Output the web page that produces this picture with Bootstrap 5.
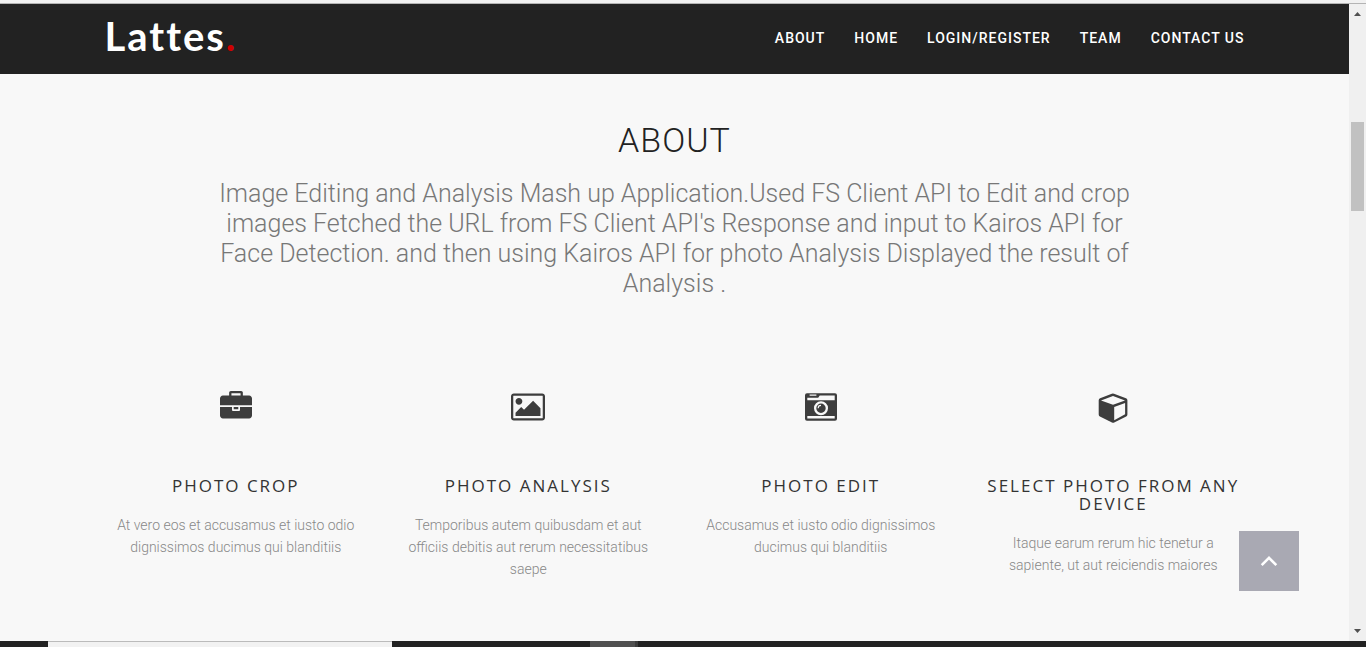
<!DOCTYPE html>
<html lang="en">
<head>
<meta charset="utf-8">
<meta name="viewport" content="width=device-width, initial-scale=1">
<title>Lattes</title>
<link href="https://cdn.jsdelivr.net/npm/bootstrap@5.3.0/dist/css/bootstrap.min.css" rel="stylesheet">
<style>
  body { font-family: Roboto, "Liberation Sans", sans-serif; background: #f8f8f8; }
  .chrome-top { height: 4px; background: #f1f1f1; border-bottom: 1px solid #b4b4b4; }
  .site-wrap { max-width: 1170px; padding: 0 15px; }
  .site-nav { background: #222; min-height: 70px; padding: 0; }
  .brand-name { font: 700 40px/48px Lato, sans-serif; letter-spacing: 2px; color: #fff; padding: 8px 0 14px; }
  .brand-name:hover { color: #fff; }
  .brand-name span { color: #d00000; }
  .site-links { gap: 29px; }
  .site-links a { color: #fff; font-weight: 500; font-size: 14px; line-height: 20px; letter-spacing: 1px; text-decoration: none; }
  .about-title { font-weight: 300; font-size: 34px; line-height: 40px; letter-spacing: 1px; color: #222; margin: 46px 0 19px; }
  .about-lead { font-weight: 300; font-size: 25px; line-height: 30px; color: #777; max-width: 940px; }
  .features { margin-top: 92px; --bs-gutter-x: 30px; }
  .feature-icon { height: 32px; fill: #3d3d3d; display: block; margin: 0 auto 54px; }
  .feature-title { font: 400 17px/18px "Open Sans", sans-serif; letter-spacing: 2px; color: #333; margin: 0 0 19px; }
  .feature-text { font-weight: 300; font-size: 14px; line-height: 22px; color: #888; }
  .to-top { right: 50px; bottom: 50px; width: 60px; height: 60px; background: #a9a9b3; border: 0; }
  .scroll-rail { width: 17px; background: #f0f0f0; }
  .scroll-thumb { width: 13px; height: 89px; background: #c1c1c1; margin-top: 106px; }
  .taskbar { height: 6px; background: #222; }
  .task-search { width: 344px; margin-left: 48px; background: #f2f2f2; border-top: 1px solid #bbb; }
  .task-active { width: 48px; margin-left: 198px; background: #505050; border-right: 3px solid #3c3c3c; }
</style>
</head>
<body class="vh-100 d-flex flex-column overflow-hidden">
<div class="chrome-top flex-shrink-0"></div>
<div class="d-flex flex-grow-1 overflow-hidden">
  <div class="flex-grow-1 position-relative overflow-hidden">
    <nav class="navbar site-nav">
      <div class="container-fluid site-wrap d-flex align-items-start">
        <a class="navbar-brand brand-name m-0" href="#">Lattes<span>.</span></a>
        <div class="site-links d-flex pt-4">
          <a href="#about">ABOUT</a>
          <a href="#home">HOME</a>
          <a href="#login">LOGIN/REGISTER</a>
          <a href="#team">TEAM</a>
          <a href="#contact">CONTACT US</a>
        </div>
      </div>
    </nav>
    <main class="container-fluid site-wrap text-center" id="about">
      <h2 class="about-title">ABOUT</h2>
      <p class="about-lead mx-auto mb-0">Image Editing and Analysis Mash up Application.Used FS Client API to Edit and crop images Fetched the URL from FS Client API's Response and input to Kairos API for Face Detection. and then using Kairos API for photo Analysis Displayed the result of Analysis .</p>
      <div class="row features">
        <div class="col-3">
          <svg class="feature-icon" width="32" viewBox="0 0 1792 1792" aria-hidden="true"><path d="M640 256h512v-128h-512v128zm1152 640v480q0 66-47 113t-113 47h-1472q-66 0-113-47t-47-113v-480h672v160q0 26 19 45t45 19h320q26 0 45-19t19-45v-160h672zm-768 0v128h-256v-128h256zm768-480v384h-1792v-384q0-66 47-113t113-47h352v-160q0-40 28-68t68-28h576q40 0 68 28t28 68v160h352q66 0 113 47t47 113z"/></svg>
          <h4 class="feature-title">PHOTO CROP</h4>
          <p class="feature-text px-2 mb-0">At vero eos et accusamus et iusto odio dignissimos ducimus qui blanditiis</p>
        </div>
        <div class="col-3">
          <svg class="feature-icon" width="34" viewBox="64 0 1920 1792" aria-hidden="true"><path d="M704 576q0 80-56 136t-136 56-136-56-56-136 56-136 136-56 136 56 56 136zm1024 384v448h-1408v-192l320-320 160 160 512-512zm96-704h-1600q-13 0-22.5 9.5t-9.5 22.5v1216q0 13 9.5 22.5t22.5 9.5h1600q13 0 22.5-9.5t9.5-22.5v-1216q0-13-9.5-22.5t-22.5-9.5zm160 32v1216q0 66-47 113t-113 47h-1600q-66 0-113-47t-47-113v-1216q0-66 47-113t113-47h1600q66 0 113 47t47 113z"/></svg>
          <h4 class="feature-title">PHOTO ANALYSIS</h4>
          <p class="feature-text px-2 mb-0">Temporibus autem quibusdam et aut officiis debitis aut rerum necessitatibus saepe</p>
        </div>
        <div class="col-3">
          <svg class="feature-icon" width="32" viewBox="0 0 32 32" aria-hidden="true"><path fill-rule="evenodd" d="M2 2.300h28a2 2 0 0 1 2 2v23.400a2 2 0 0 1-2 2H2a2 2 0 0 1-2-2V4.300a2 2 0 0 1 2-2zM2.300 25v2.400h27.400V25zM2.300 6.800v2.500h27.400V4.600H14.700l-1.500 2.200zM4.600 3.600v1.200h6.800V3.600zM16 10.200a7 7 0 1 0 0 14 7 7 0 0 0 0-14zm0 2.300a4.700 4.700 0 1 1 0 9.400 4.700 4.700 0 0 1 0-9.400zm0 1.300a3.400 3.400 0 0 0-3.400 3.400h1.100A2.300 2.300 0 0 1 16 14.900z"/></svg>
          <h4 class="feature-title">PHOTO EDIT</h4>
          <p class="feature-text px-2 mb-0">Accusamus et iusto odio dignissimos ducimus qui blanditiis</p>
        </div>
        <div class="col-3">
          <svg class="feature-icon" width="32" viewBox="0 0 32 32" aria-hidden="true"><path fill-rule="evenodd" d="M14.800 2.800a3 3 0 0 1 2.200 0l12 4.500a2 2 0 0 1 1.400 2v14.200a2.300 2.300 0 0 1-1.200 2L17.200 31.500a2 2 0 0 1-2.200 0L2.900 25.500a2.300 2.300 0 0 1-1.200-2V9.300a2 2 0 0 1 1.400-2zM16 5L4 9.400l12 4.400 12-4.400zM17.200 16v13.200l10.900-5.900V12z"/></svg>
          <h4 class="feature-title">SELECT PHOTO FROM ANY DEVICE</h4>
          <p class="feature-text px-2 mb-0">Itaque earum rerum hic tenetur a sapiente, ut aut reiciendis maiores</p>
        </div>
      </div>
    </main>
    <button type="button" class="to-top position-absolute p-0 d-flex align-items-center justify-content-center" aria-label="Back to top">
      <svg width="18" height="12" viewBox="0 0 18 12" fill="none" stroke="#fff" stroke-width="2.600" aria-hidden="true"><path d="M1.700 10.200L9 2.900l7.300 7.300"/></svg>
    </button>
  </div>
  <div class="scroll-rail flex-shrink-0 d-flex flex-column align-items-center pt-2">
    <svg width="7" height="4" viewBox="0 0 7 4" fill="#505050" class="flex-shrink-0" aria-hidden="true"><path d="M0 4L3.500 0 7 4z"/></svg>
    <div class="scroll-thumb flex-shrink-0"></div>
    <svg width="7" height="4" viewBox="0 0 7 4" fill="#505050" class="mt-auto mb-2" aria-hidden="true"><path d="M0 0h7L3.500 4z"/></svg>
  </div>
</div>
<div class="taskbar d-flex flex-shrink-0">
  <div class="task-search"></div>
  <div class="task-active"></div>
</div>
<script src="https://cdn.jsdelivr.net/npm/bootstrap@5.3.0/dist/js/bootstrap.bundle.min.js"></script>
</body>
</html>
